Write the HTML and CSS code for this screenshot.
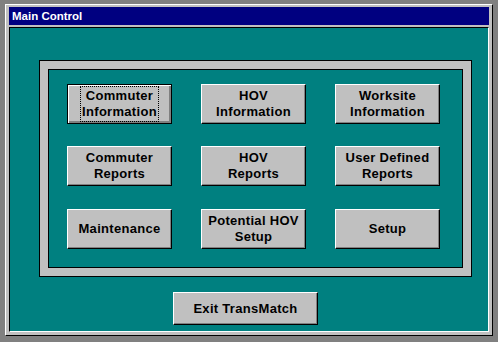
FILE: index.html
```html
<!DOCTYPE html>
<html>
<head>
    <title>Main Control</title>
    <link rel="stylesheet" href="styles.css">
</head>
<body>
    <div class="window">
        <div class="titlebar">Main Control</div>
        <div class="client">
            <div class="panel">
                <div class="panel-inner">
                    <button class="btn focused"><span class="focus">Commuter<br>Information</span></button>
                    <button class="btn">HOV<br>Information</button>
                    <button class="btn">Worksite<br>Information</button>
                    <button class="btn">Commuter<br>Reports</button>
                    <button class="btn">HOV<br>Reports</button>
                    <button class="btn">User Defined<br>Reports</button>
                    <button class="btn">Maintenance</button>
                    <button class="btn">Potential HOV<br>Setup</button>
                    <button class="btn">Setup</button>
                </div>
            </div>
            <button class="btn exit">Exit TransMatch</button>
        </div>
    </div>
</body>
</html>
```

FILE: styles.css
```css
html, body {
    margin: 0;
    padding: 0;
}
body {
    background: #808080;
    width: 498px;
    height: 342px;
    overflow: hidden;
    font-family: "Liberation Sans", Arial, sans-serif;
}
.window {
    margin: 4px 0 0 5px;
    width: 488px;
    height: 332px;
    box-sizing: border-box;
    background: #c0c0c0;
    border-top: 1px solid #fff;
    border-left: 1px solid #fff;
    border-right: 1px solid #000;
    border-bottom: 1px solid #000;
    padding: 2px 3px 3px 3px;
}
.titlebar {
    height: 18px;
    background: #000080;
    color: #fff;
    font-weight: bold;
    font-size: 11.5px;
    line-height: 18px;
    padding-left: 3px;
}
.client {
    margin-top: 2px;
    height: 305px;
    box-sizing: border-box;
    background: #008080;
    border-top: 1px solid #000;
    border-left: 1px solid #000;
    border-right: 1px solid #fff;
    border-bottom: 1px solid #fff;
    padding: 32px 0 0 29px;
}
.panel {
    width: 433px;
    height: 217px;
    box-sizing: border-box;
    border: 1px solid #000;
    background: #c0c0c0;
    padding: 8px;
}
.panel-inner {
    height: 100%;
    box-sizing: border-box;
    background: #008080;
    border: 1px solid #000;
    padding: 14px 0 0 18px;
    display: grid;
    grid-template-columns: repeat(3, 105px);
    grid-template-rows: 40px 40px 41px;
    column-gap: 29px;
    row-gap: 22px;
    align-items: end;
}
.btn {
    box-sizing: border-box;
    margin: 0;
    padding: 0;
    height: 40px;
    background: #c0c0c0;
    color: #000;
    font-family: "Liberation Sans", Arial, sans-serif;
    font-weight: bold;
    font-size: 13px;
    letter-spacing: 0.3px;
    line-height: 16px;
    border-top: 1px solid #fff;
    border-left: 1px solid #fff;
    border-right: 1px solid #000;
    border-bottom: 1px solid #000;
    box-shadow: inset -1px -1px 0 #808080;
    display: flex;
    align-items: center;
    justify-content: center;
    text-align: center;
}
.btn.focused {
    border: 1px solid #000;
    box-shadow: inset 1px 1px 0 #fff, inset -2px -2px 0 #808080;
}
.focus {
    outline: 1px dotted #000;
    padding: 1px 1px;
}
.exit {
    width: 145px;
    height: 33px;
    margin: 15px 0 0 134px;
}
```
